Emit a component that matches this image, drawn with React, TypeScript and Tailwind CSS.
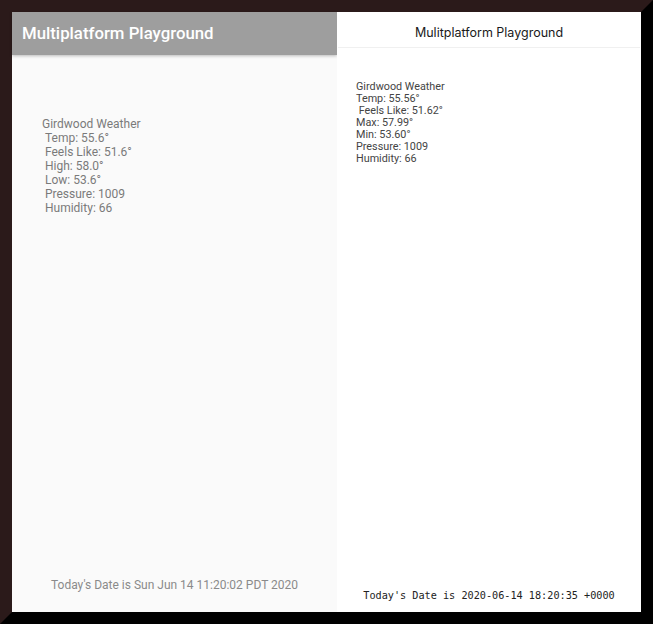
import React from "react";

export default function App() {
  const left = [
    "Girdwood Weather",
    "\u00a0Temp: 55.6°",
    "\u00a0Feels Like: 51.6°",
    "\u00a0High: 58.0°",
    "\u00a0Low: 53.6°",
    "\u00a0Pressure: 1009",
    "\u00a0Humidity: 66",
  ];
  const right = [
    "Girdwood Weather",
    "Temp: 55.56°",
    "\u00a0Feels Like: 51.62°",
    "Max: 57.99°",
    "Min: 53.60°",
    "Pressure: 1009",
    "Humidity: 66",
  ];
  return (
    <div className="w-[653px] h-[624px] border-[12px] border-t-[#2b1a1a] border-l-[#2b1a1a] border-b-black border-r-black flex">
      <div className="w-[325px] h-full bg-[#fafafa] flex flex-col font-['Roboto',sans-serif]">
        <div className="h-[43px] bg-[#9e9e9e] shadow-[0_1px_3px_rgba(0,0,0,0.25)] flex items-center px-[10px] text-white text-[16.8px] font-medium">
          Multiplatform Playground
        </div>
        <div className="flex-1 flex flex-col justify-between pb-[20px]">
          <div className="pt-[62px] pl-[30px] text-[12px] leading-[14px] text-[#7a7a7a]">
            {left.map((t) => (
              <div key={t}>{t}</div>
            ))}
          </div>
          <div className="text-center text-[12px] leading-[14px] text-[#8a8a8a]">
            Today's Date is Sun Jun 14 11:20:02 PDT 2020
          </div>
        </div>
      </div>
      <div className="flex-1 h-full bg-white flex flex-col">
        <div className="h-[36px] pt-[8px] mx-[1px] border-b border-[#f0f0f0] flex items-center justify-center text-[12.5px] text-[#1a1a1a] font-['Inter',sans-serif]">
          Mulitplatform Playground
        </div>
        <div className="flex-1 flex flex-col justify-between pb-[10px]">
          <div className="pt-[33px] pl-[19px] text-[10.8px] leading-[12px] text-[#444] font-['Roboto',sans-serif]">
            {right.map((t) => (
              <div key={t}>{t}</div>
            ))}
          </div>
          <div className="text-center text-[10.2px] leading-[12px] text-[#222] font-['DejaVu_Sans_Mono',monospace]">
            Today's Date is 2020-06-14 18:20:35 +0000
          </div>
        </div>
      </div>
    </div>
  );
}
